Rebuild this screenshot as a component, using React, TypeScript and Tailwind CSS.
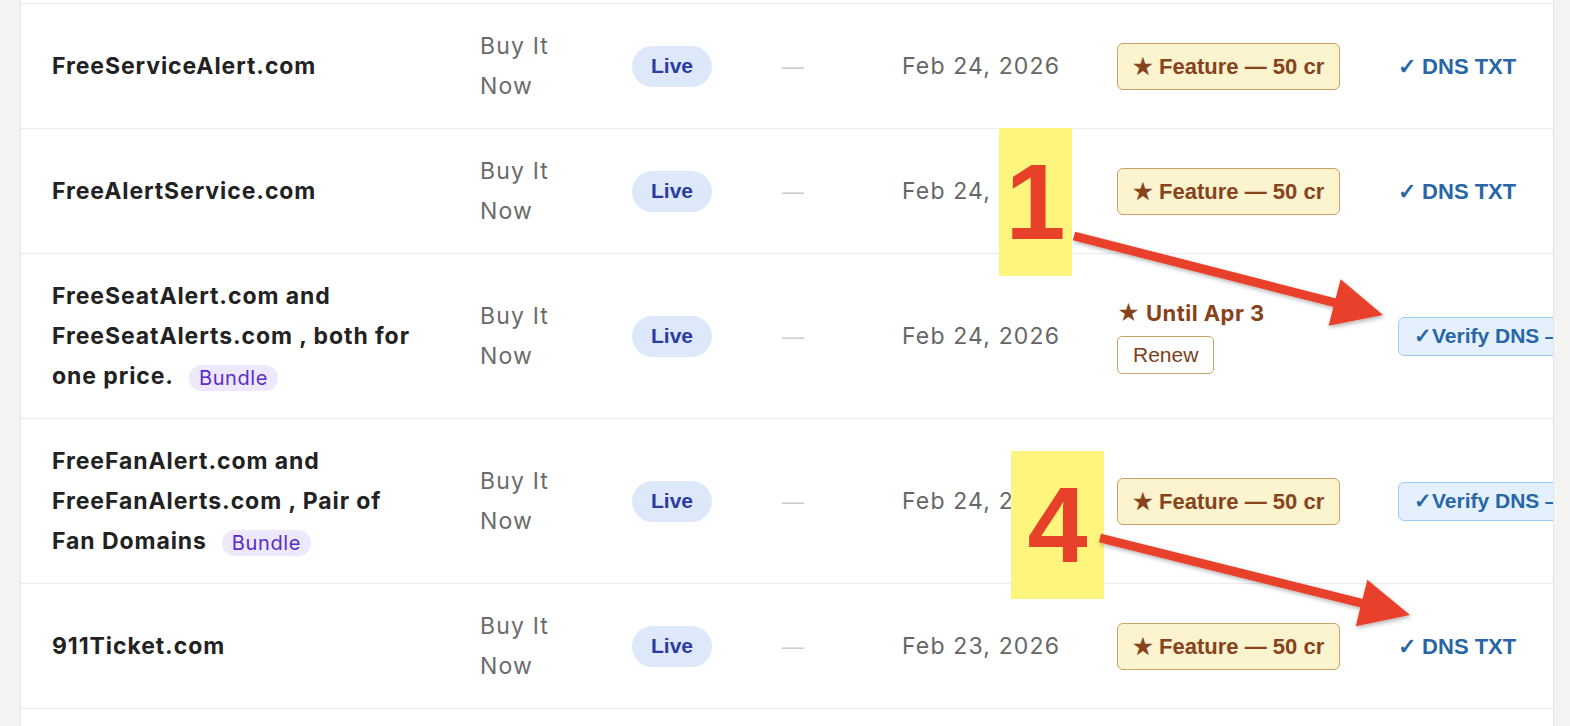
import React from "react";

type Row = {
  name: React.ReactNode;
  date: string;
  promo: "feature" | "until";
  dns: "txt" | "verify";
};

const sans = "font-['Inter','Liberation_Sans',sans-serif]";
const arial = "font-['Liberation_Sans','Arial',sans-serif]";

const Bundle = () => (
  <span className="ml-[15px] inline-block rounded-full bg-[#ede8fc] px-[10px] align-middle text-[20px] font-normal leading-[26px] tracking-[0.03em] text-[#5b2ec4]">
    Bundle
  </span>
);

const rows: Row[] = [
  { name: "FreeServiceAlert.com", date: "Feb 24, 2026", promo: "feature", dns: "txt" },
  { name: "FreeAlertService.com", date: "Feb 24, 2026", promo: "feature", dns: "txt" },
  {
    name: (
      <>
        FreeSeatAlert.com and FreeSeatAlerts.com , both for one price.
        <Bundle />
      </>
    ),
    date: "Feb 24, 2026",
    promo: "until",
    dns: "verify",
  },
  {
    name: (
      <>
        FreeFanAlert.com and FreeFanAlerts.com , Pair of Fan Domains
        <Bundle />
      </>
    ),
    date: "Feb 24, 2026",
    promo: "feature",
    dns: "verify",
  },
  { name: "911Ticket.com", date: "Feb 23, 2026", promo: "feature", dns: "txt" },
];

const Promo = ({ kind }: { kind: Row["promo"] }) => {
  if (kind === "until") {
    return (
      <div className="flex flex-col items-start gap-[10px] pt-[2px]">
        <span className={`${sans} text-[22px] font-bold leading-[26px] tracking-[0.02em] text-[#87431b]`}>★ Until Apr 3</span>
        <button className={`${arial} h-[38px] rounded-[5px] border border-[#c9a36a] bg-white px-[15px] text-[21px] text-[#7a3f1a]`}>
          Renew
        </button>
      </div>
    );
  }
  return (
    <button className={`${arial} h-[47px] whitespace-nowrap rounded-[6px] border border-[#c9a36a] bg-[#fcf3cf] px-[15px] text-[22px] font-bold text-[#87431b]`}>
      ★ Feature — 50 cr
    </button>
  );
};

const Dns = ({ kind }: { kind: Row["dns"] }) => {
  if (kind === "verify") {
    return (
      <button className={`${arial} h-[39px] whitespace-nowrap rounded-l-[6px] border border-[#9ccaf0] bg-[#e4f1fd] pl-[15px] pr-4 text-[21px] font-bold text-[#2866a5]`}>
        ✓Verify DNS — TXT
      </button>
    );
  }
  return <span className={`${arial} whitespace-nowrap text-[22px] font-bold text-[#2866a5]`}>✓ DNS TXT</span>;
};

const Arrows = () => (
  <svg className="pointer-events-none absolute left-0 top-0" width="1570" height="726" viewBox="0 0 1570 726">
    <defs>
      <filter id="sh" x="-10%" y="-10%" width="120%" height="130%">
        <feDropShadow dx="1" dy="2" stdDeviation="2" floodColor="#000" floodOpacity="0.3" />
      </filter>
    </defs>
    <g filter="url(#sh)" fill="#e8412a" stroke="#e8412a">
      <line x1="1074" y1="236" x2="1338" y2="303.5" strokeWidth="9" />
      <polygon points="1383,315 1328.6,325.7 1340.6,279.3" stroke="none" />
    </g>
    <g filter="url(#sh)" fill="#e8412a" stroke="#e8412a">
      <line x1="1100" y1="538" x2="1365" y2="604" strokeWidth="9" />
      <polygon points="1410,615 1355.7,626.3 1367.3,579.7" stroke="none" />
    </g>
  </svg>
);

const Marker = ({ n, className }: { n: string; className: string }) => (
  <div className={`absolute flex items-center justify-center bg-[#fdf57e] ${className}`}>
    <span className={`${arial} text-[108px] font-bold leading-none text-[#e8412a]`}>{n}</span>
  </div>
);

export default function App() {
  return (
    <div className="relative h-[726px] w-[1570px] overflow-hidden bg-[#f3f3f1]">
      <div className="ml-[20px] h-full w-[1534px] overflow-hidden border-x border-[#e4e4e2] bg-white">
        <div className="h-[3px]" />
        {rows.map((r, i) => (
          <div
            key={i}
            className="grid grid-cols-[428px_152px_150px_120px_215px_281px_1fr] items-center border-t border-[#ececec] py-[22px] pl-[31px]"
          >
            <div className={`${sans} w-[376px] text-[23px] font-bold leading-[40px] tracking-[0.04em] text-[#222]`}>{r.name}</div>
            <div className={`${sans} w-[110px] text-[23px] leading-[40px] tracking-[0.05em] text-[#6b6b6b]`}>Buy It Now</div>
            <div>
              <span className={`${arial} flex h-[41px] w-[80px] items-center justify-center rounded-full bg-[#dde8fa] text-[21px] font-bold text-[#2a3ca0]`}>
                Live
              </span>
            </div>
            <div className={`${arial} text-[22px] text-[#cccccc]`}>—</div>
            <div className={`${sans} whitespace-nowrap text-[23px] tracking-[0.05em] text-[#666]`}>{r.date}</div>
            <div>
              <Promo kind={r.promo} />
            </div>
            <div>
              <Dns kind={r.dns} />
            </div>
          </div>
        ))}
        <div className="border-t border-[#ececec]" />
      </div>
      <Marker n="1" className="left-[999px] top-[128px] h-[148px] w-[73px]" />
      <Marker n="4" className="left-[1011px] top-[451px] h-[148px] w-[93px]" />
      <Arrows />
    </div>
  );
}
